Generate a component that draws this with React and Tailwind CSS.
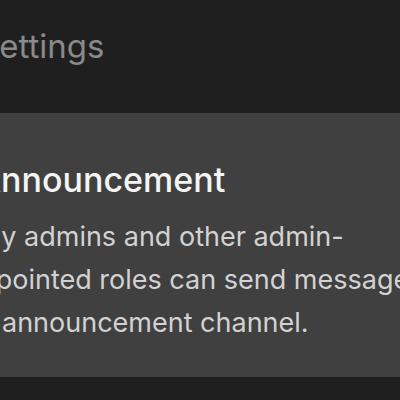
export default function App() {
  return (
    <div className="w-[400px] h-[400px] overflow-hidden bg-[#1f1f1f] flex flex-col" style={{ fontFamily: "Inter, sans-serif" }}>
      <div className="h-[113px] shrink-0 flex items-start pt-[26px]">
        <div className="text-[33px] leading-[40px] text-[#8a8a8a] whitespace-nowrap -ml-[22px]">Settings</div>
      </div>
      <div className="h-[264px] shrink-0 bg-[#404040] overflow-hidden pt-[46px]">
        <div className="text-[34px] leading-[42px] font-medium text-[#f4f4f4] whitespace-nowrap -ml-[23px]">Announcement</div>
        <div className="mt-[14px] text-[27px] leading-[43px] text-[#d2d2d2] whitespace-nowrap">
          <div className="-ml-[42px]">Only admins and other admin-</div>
          <div className="-ml-[36px]">appointed roles can send messages</div>
          <div className="ml-[2px]">announcement channel.</div>
        </div>
      </div>
      <div className="flex-1"></div>
    </div>
  );
}
